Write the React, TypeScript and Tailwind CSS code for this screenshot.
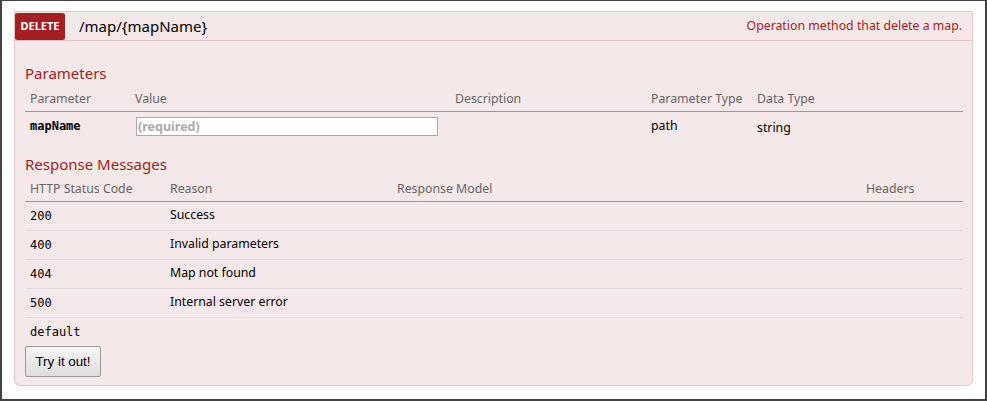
import React from "react";

const sans = { fontFamily: '"Noto Sans", "Open Sans", sans-serif' };
const mono = { fontFamily: '"DejaVu Sans Mono", "Liberation Mono", monospace' };

export default function App() {
  const responses = [
    ["200", "Success"],
    ["400", "Invalid parameters"],
    ["404", "Map not found"],
    ["500", "Internal server error"],
  ];
  return (
    <div
      className="w-[987px] h-[401px] bg-white border-[#444] border-t border-l-2 border-r-2 border-b-2 box-border pt-[10px] px-[12px] overflow-hidden"
      style={sans}
    >
      <div className="w-[959px] border border-[#e8c6c7] rounded-b-[6px] bg-[#f5e8e8]">
        {/* heading */}
        <div className="flex items-center h-[29px] border-b border-[#e8c6c7]">
          <span className="w-[50px] h-[27px] flex items-center justify-center bg-[#a41e22] text-white text-[11px] font-bold rounded-[2px] uppercase">
            delete
          </span>
          <span className="ml-[14px] text-[15px] text-black leading-none">/map/&#123;mapName&#125;</span>
          <span className="ml-auto mr-[10px] text-[12.3px] text-[#a41e22]">
            Operation method that delete a map.
          </span>
        </div>
        {/* content */}
        <div className="px-[10px] pb-[8px]">
          <h4 className="mt-[22px] text-[15px] leading-[20px] text-[#a41e22]">Parameters</h4>
          <table className="w-[938px] mt-[5px] border-collapse text-[12.3px]">
            <thead>
              <tr className="border-b border-[#999] text-[#666]">
                <th className="w-[105px] text-left font-normal pl-[5px] h-[23px]">Parameter</th>
                <th className="w-[320px] text-left font-normal pl-[5px]">Value</th>
                <th className="w-[196px] text-left font-normal pl-[5px]">Description</th>
                <th className="w-[106px] text-left font-normal pl-[5px]">Parameter Type</th>
                <th className="text-left font-normal pl-[5px]">Data Type</th>
              </tr>
            </thead>
            <tbody>
              <tr className="h-[30px] text-black">
                <td className="pl-[5px] text-[12px] font-bold" style={mono}>mapName</td>
                <td className="pl-[6px]">
                  <input
                    className="w-[302px] h-[19px] border border-[#aaa] bg-white font-bold placeholder:text-[#aaa] text-[12.5px] px-[1px] outline-none"
                    placeholder="(required)"
                  />
                </td>
                <td className="pl-[5px]"></td>
                <td className="pl-[5px] align-top pt-[5px]">path</td>
                <td className="pl-[5px] pt-[4px]">string</td>
              </tr>
            </tbody>
          </table>
          <h4 className="mt-[13px] text-[15px] leading-[20px] text-[#a41e22]">Response Messages</h4>
          <table className="w-[938px] mt-[4px] border-collapse text-[12.3px]">
            <thead>
              <tr className="border-b border-[#999] text-[#666]">
                <th className="w-[140px] text-left font-normal pl-[5px] h-[23px]">HTTP Status Code</th>
                <th className="w-[227px] text-left font-normal pl-[5px]">Reason</th>
                <th className="w-[469px] text-left font-normal pl-[5px]">Response Model</th>
                <th className="text-left font-normal pl-[5px]">Headers</th>
              </tr>
            </thead>
            <tbody>
              {responses.map(([code, reason]) => (
                <tr key={code} className="h-[29px] border-b border-[#ddd] text-black">
                  <td className="pl-[5px] text-[12px]" style={mono}>{code}</td>
                  <td className="pl-[5px]">{reason}</td>
                  <td></td>
                  <td></td>
                </tr>
              ))}
              <tr className="h-[29px] text-black">
                <td className="pl-[5px] text-[12px]" style={mono}>default</td>
                <td></td>
                <td></td>
                <td></td>
              </tr>
            </tbody>
          </table>
          <button
            className="mt-[0px] w-[76px] h-[31px] border border-[#999] rounded-[2px] bg-gradient-to-b from-[#f6f6f6] to-[#dddddd] text-[13.33px] text-black"
            style={{ fontFamily: '"Liberation Sans", Arial, sans-serif' }}
          >
            Try it out!
          </button>
        </div>
      </div>
    </div>
  );
}
